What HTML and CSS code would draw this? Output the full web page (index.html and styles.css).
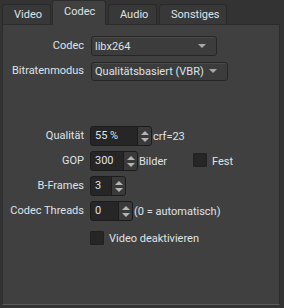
FILE: index.html
```html
<!DOCTYPE html>
<html>
<head>
	<meta charset="utf-8">
	<title>Codec</title>
	<link rel="stylesheet" href="styles.css">
</head>
<body>
  <div class="tabs">
    <div class="tab tab-video">Video</div>
    <div class="tab tab-codec active">Codec</div>
    <div class="tab tab-audio">Audio</div>
    <div class="tab tab-misc">Sonstiges</div>
  </div>
  <div class="panel">
    <div class="form">
      <div class="label">Codec</div>
      <div class="field"><div class="combo w-codec"><span>libx264</span><i class="arrow"></i></div></div>

      <div class="label">Bitratenmodus</div>
      <div class="field"><div class="combo w-mode"><span>Qualitätsbasiert (VBR)</span><i class="arrow"></i></div></div>

      <div class="spacer"></div>

      <div class="label">Qualität</div>
      <div class="field">
        <div class="spin w-quality"><span class="val">55 %</span><span class="btns"><i class="up"></i><i class="down"></i></span></div>
        <span class="after">crf=23</span>
      </div>

      <div class="label">GOP</div>
      <div class="field">
        <div class="spin w-gop"><span class="val">300</span><span class="btns"><i class="up"></i><i class="down"></i></span></div>
        <span class="after">Bilder</span>
        <span class="check check-fest"></span><span class="check-text">Fest</span>
      </div>

      <div class="label">B-Frames</div>
      <div class="field">
        <div class="spin w-bframes"><span class="val">3</span><span class="btns"><i class="up"></i><i class="down"></i></span></div>
      </div>

      <div class="label">Codec Threads</div>
      <div class="field">
        <div class="spin w-threads"><span class="val">0</span><span class="btns"><i class="up"></i><i class="down"></i></span></div>
        <span class="after">(0 = automatisch)</span>
      </div>

      <div class="label"></div>
      <div class="field field-check">
        <span class="check"></span><span class="check-text">Video deaktivieren</span>
      </div>
    </div>
  </div>
</body>
</html>
```
FILE: styles.css
```css
body {
	font-family: Roboto, "Liberation Sans", Arial, sans-serif;
	font-size: 11px;
	color: #dfe3e8;
	background: #333333;
	margin: 0;
	padding: 0;
	width: 284px;
	height: 308px;
	overflow: hidden;
}
.tabs {
	display: flex;
	align-items: flex-end;
	height: 24px;
	padding-left: 2px;
	gap: 1px;
}
.tab {
	box-sizing: border-box;
	height: 20px;
	background: #383838;
	border: 1px solid #2a2a2a;
	border-bottom: none;
	border-radius: 3px 3px 0 0;
	padding-left: 11px;
	line-height: 19px;
}
.tab-video {
	width: 49px;
}
.tab-codec {
	width: 54px;
}
.tab-audio {
	width: 49px;
	margin-left: 1px;
}
.tab-misc {
	width: 68px;
	margin-left: 1px;
}
.tab.active {
	background: #404040;
	border-color: #2c2c2c;
	line-height: 21px;
	padding-left: 11px;
	position: relative;
	z-index: 1;
	margin-bottom: -1px;
	height: 25px;
}
.panel {
	box-sizing: border-box;
	margin-left: 2px;
	width: 278px;
	height: 281px;
	background: #404040;
	border: 1px solid #2c2c2c;
	border-bottom: 1px solid #5a5a5a;
}
.form {
	display: grid;
	grid-template-columns: 81px 1fr;
	column-gap: 6px;
	row-gap: 5px;
	padding-top: 11px;
}
.label {
	text-align: right;
	height: 20px;
	line-height: 20px;
}
.field {
	display: flex;
	align-items: center;
	height: 20px;
}
.spacer {
	grid-column: 1 / 3;
	height: 35px;
}
.combo {
	box-sizing: border-box;
	display: flex;
	align-items: center;
	justify-content: space-between;
	height: 20px;
	margin-left: 1px;
	padding: 0 10px 0 3px;
	background: #3c3c3c;
	border: 1px solid #262626;
	border-radius: 3px;
	box-shadow: inset 0 1px 0 #4a4a4a;
}
.w-codec {
	width: 126px;
}
.w-mode {
	width: 137px;
	height: 19px;
}
.arrow {
	width: 0;
	height: 0;
	border-left: 4px solid transparent;
	border-right: 4px solid transparent;
	border-top: 4px solid #a8a8a8;
}
.spin {
	box-sizing: border-box;
	display: flex;
	height: 20px;
	background: #262626;
	border: 1px solid #1c1c1c;
	border-radius: 3px;
	overflow: hidden;
}
.spin .val {
	flex: 1;
	padding-left: 4px;
	line-height: 18px;
}
.btns {
	width: 13px;
	display: flex;
	flex-direction: column;
	align-items: center;
	justify-content: center;
	gap: 3px;
	background: #3a3a3a;
	border-left: 1px solid #1c1c1c;
}
.up {
	width: 0;
	height: 0;
	border-left: 4px solid transparent;
	border-right: 4px solid transparent;
	border-bottom: 4px solid #b4b4b4;
}
.down {
	width: 0;
	height: 0;
	border-left: 4px solid transparent;
	border-right: 4px solid transparent;
	border-top: 4px solid #b4b4b4;
}
.w-quality {
	width: 62px;
}
.w-gop {
	width: 48px;
}
.w-bframes {
	width: 36px;
}
.w-threads {
	width: 43px;
}
.after {
	margin-left: 1px;
}
.check {
	box-sizing: border-box;
	display: inline-block;
	width: 14px;
	height: 14px;
	background: #262626;
	border: 1px solid #202020;
	border-radius: 1px;
}
.check-fest {
	margin-left: 26px;
	margin-top: -3px;
}
.check-text {
	margin-left: 5px;
}
.field-check {
	margin-top: 2px;
}
```
